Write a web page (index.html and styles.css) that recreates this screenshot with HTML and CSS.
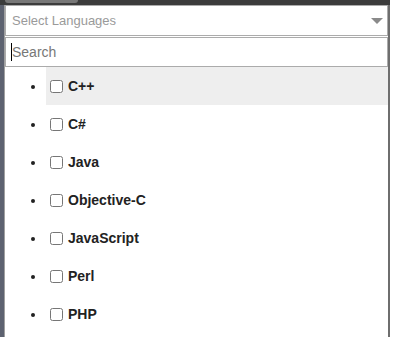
FILE: index.html
```html
<!DOCTYPE html>
<html>
<head>
  <title>Select Languages</title>
  <link rel="stylesheet" href="styles.css">
</head>
<body>
  <div class="topbar">
    <div class="tab"></div>
  </div>

  <div class="frame">
    <div class="side"></div>

    <div class="panel">
      <div class="select">
        <span class="select-text">Select Languages</span>
        <span class="caret"></span>
      </div>

      <div class="search">
        <span class="text-cursor"></span>
        <span class="search-placeholder">Search</span>
      </div>

      <ul class="options">
        <li class="option active"><label><input type="checkbox">C++</label></li>
        <li class="option"><label><input type="checkbox">C#</label></li>
        <li class="option"><label><input type="checkbox">Java</label></li>
        <li class="option"><label><input type="checkbox">Objective-C</label></li>
        <li class="option"><label><input type="checkbox">JavaScript</label></li>
        <li class="option"><label><input type="checkbox">Perl</label></li>
        <li class="option"><label><input type="checkbox">PHP</label></li>
      </ul>
    </div>
  </div>
</body>
</html>
```

FILE: styles.css
```css
body {
  margin: 0;
  padding: 0;
  background-color: #fff;
  font-family: "Liberation Sans", Arial, sans-serif;
  color: #222;
  overflow: hidden;
}

.topbar {
  width: 390px;
  height: 5px;
  background-color: #3c3c3c;
}

.tab {
  margin-left: 5px;
  width: 73px;
  height: 3px;
  background-color: #787878;
  border-radius: 0 0 3px 3px;
}

.frame {
  display: flex;
  width: 390px;
  height: 332px;
}

.side {
  width: 4px;
  background-color: #5d6270;
}

.panel {
  flex: 1;
  border-left: 1px solid #a0a0a0;
  border-right: 2px solid #6e6e6e;
}

.select {
  display: flex;
  align-items: center;
  height: 29px;
  padding: 0 4px 0 6px;
  border: 1px solid #ababab;
}

.select-text {
  font-size: 13px;
  color: #9a9a9a;
}

.caret {
  margin-left: auto;
  width: 0;
  height: 0;
  border-left: 6px solid transparent;
  border-right: 6px solid transparent;
  border-top: 6px solid #8a8a8a;
}

.search {
  display: flex;
  align-items: center;
  height: 28px;
  margin-top: 1px;
  padding: 0 5px;
  border: 1px solid #ababab;
}

.text-cursor {
  width: 1px;
  height: 18px;
  background-color: #000;
}

.search-placeholder {
  font-size: 14px;
  color: #777;
}

.options {
  margin: 0;
  padding: 0 0 0 41px;
}

.option {
  height: 38px;
  line-height: 38px;
  font-size: 14px;
  font-weight: bold;
}

.option.active {
  background-color: #eee;
}

.option input {
  width: 13px;
  height: 13px;
  margin: 0 5px 0 4px;
  vertical-align: -2px;
}
```
